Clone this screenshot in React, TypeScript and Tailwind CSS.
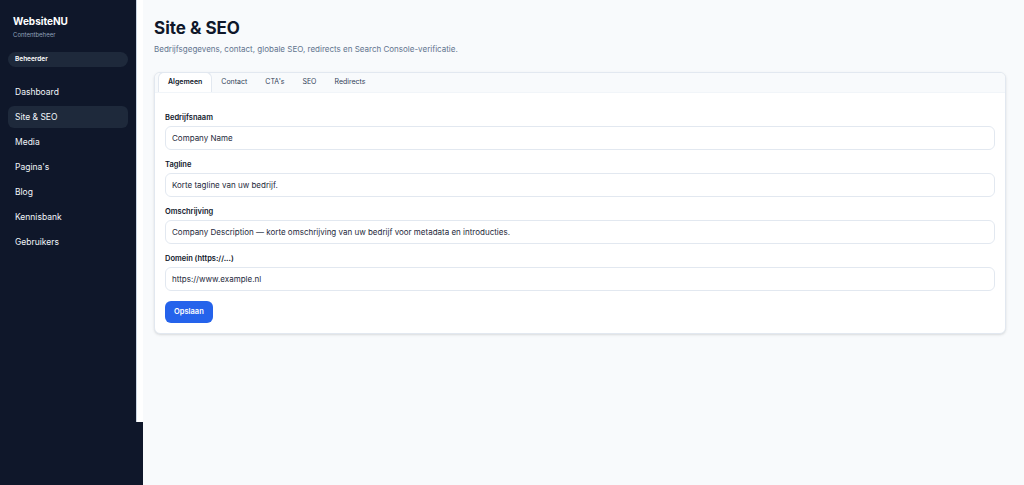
const navItems = ['Dashboard', 'Site & SEO', 'Media', "Pagina's", 'Blog', 'Kennisbank', 'Gebruikers'];

const tabs = ['Algemeen', 'Contact', "CTA's", 'SEO', 'Redirects'];

const fields = [
  { label: 'Bedrijfsnaam', value: 'Company Name' },
  { label: 'Tagline', value: 'Korte tagline van uw bedrijf.' },
  {
    label: 'Omschrijving',
    value: 'Company Description — korte omschrijving van uw bedrijf voor metadata en introducties.',
  },
  { label: 'Domein (https://...)', value: 'https://www.example.nl' },
];

export default function App() {
  return (
    <div className="flex min-h-screen bg-[#f8fafc] font-['Inter',sans-serif]">
      {/* sidebar */}
      <div className="flex w-[143px] shrink-0 items-start bg-[#0f172a]">
        <aside className="w-[136px] px-2 pt-[15px]">
          <div className="px-[5px]">
            <div className="text-[10px] font-bold leading-[12px] text-white">WebsiteNU</div>
            <div className="mt-[4px] text-[6px] leading-[8px] text-slate-400">Contentbeheer</div>
          </div>
          <div className="mt-[13px] flex h-[15px] items-center rounded-full bg-[#1e293b] px-[7px] text-[6.5px] font-semibold leading-none text-white">
            Beheerder
          </div>
          <nav className="mt-[14px] flex flex-col gap-[3px]">
            {navItems.map((item) => (
              <div
                key={item}
                className={`flex h-[22px] items-center rounded-md px-[7px] text-[8.5px] text-slate-100 ${
                  item === 'Site & SEO' ? 'bg-[#1e293b]' : ''
                }`}
              >
                {item}
              </div>
            ))}
          </nav>
        </aside>
        <div className="h-[422px] w-[7px] border-l border-slate-300 bg-white" />
      </div>

      {/* main */}
      <main className="flex-1 pl-[11px] pr-[18px] pt-[17px]">
        <h1 className="text-[17px] font-bold leading-[22px] text-[#0f172a]">Site &amp; SEO</h1>
        <p className="mt-[4px] text-[8px] leading-[12px] text-slate-500">
          Bedrijfsgegevens, contact, globale SEO, redirects en Search Console-verificatie.
        </p>

        <div className="mt-[17px] overflow-hidden rounded-md border border-slate-200 bg-white shadow-sm">
          <div className="flex h-[20px] items-end border-b border-slate-100 bg-[#f8fafc] pl-[3px]">
            {tabs.map((tab) => (
              <div
                key={tab}
                className={`flex h-[20px] items-center px-[9px] text-[7px] ${
                  tab === 'Algemeen'
                    ? 'rounded-t-md border-x border-t border-slate-200 bg-white font-semibold text-[#0f172a]'
                    : 'text-slate-700'
                }`}
              >
                {tab}
              </div>
            ))}
          </div>

          <div className="flex flex-col gap-[9px] px-[10px] pb-[10px] pt-[19px]">
            {fields.map((field) => (
              <div key={field.label}>
                <div className="mb-[3px] text-[7.5px] font-semibold leading-[11px] text-[#0f172a]">
                  {field.label}
                </div>
                <div className="flex h-[24px] items-center rounded-md border border-slate-200 bg-white px-[6px] text-[8px] text-[#1e293b]">
                  {field.value}
                </div>
              </div>
            ))}
            <div className="flex pt-[1px]">
              <button className="flex h-[22px] items-center rounded-md bg-[#2563eb] px-[9px] text-[7.5px] font-semibold text-white">
                Opslaan
              </button>
            </div>
          </div>
        </div>
      </main>
    </div>
  );
}
